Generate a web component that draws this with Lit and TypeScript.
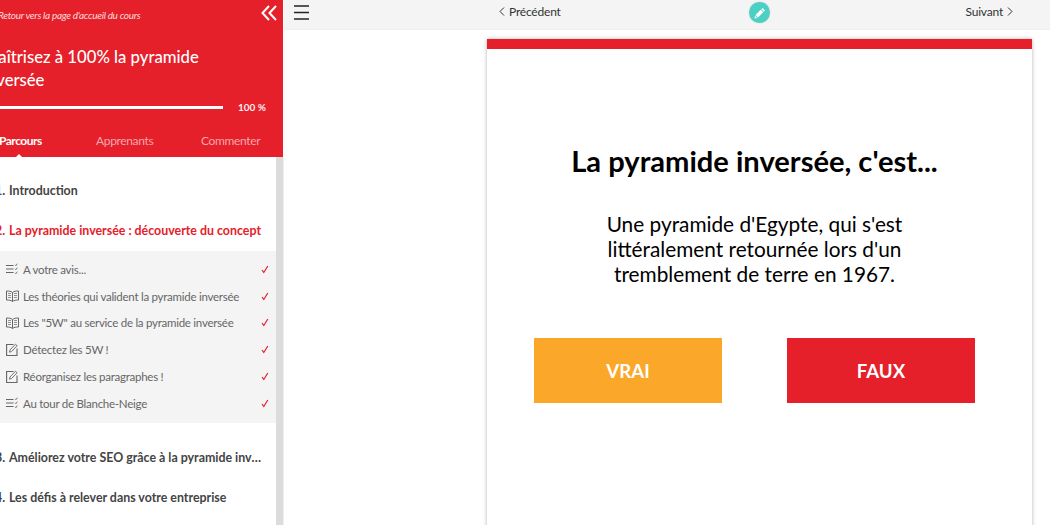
import { LitElement, html, css, svg } from "lit";
import { customElement } from "lit/decorators.js";

const listIcon = svg`<svg class="ic" viewBox="0 0 12 12" width="12" height="12" fill="none" stroke="#666" stroke-width="1"><path d="M0 2.500h7.500M0 6h7.500M0 9.500h7.500"/><path d="M9 1.800l.9.9 1.400-2M9 5.800l.9.9 1.400-2M9 9.800l.9.9 1.400-2" stroke-width=".9"/></svg>`;
const bookIcon = svg`<svg class="ic" viewBox="0 0 13 12" width="13" height="12" fill="none" stroke="#666" stroke-width="1"><path d="M6.500 2.500C5 1.200 3 1 .5 1v9c2.500 0 4.500.2 6 1.500 1.500-1.300 3.500-1.500 6-1.500V1c-2.500 0-4.500.2-6 1.500zM6.500 2.500v9"/><path d="M2 3.500h3M2 5.500h3M2 7.500h3M8 3.500h3M8 5.500h3M8 7.500h3" stroke-width=".7"/></svg>`;
const editIcon = svg`<svg class="ic" viewBox="0 0 12 13" width="12" height="13" fill="none" stroke="#666" stroke-width="1.100"><path d="M11 5.500v7H.6V1.500h7"/><path d="M3.500 9.200l.5-2.200L9.500 1.200l1.600 1.500-5.500 5.800z" stroke-width=".9"/></svg>`;

const items = [
  [listIcon, "A votre avis..."],
  [bookIcon, "Les théories qui valident la pyramide inversée"],
  [bookIcon, 'Les "5W" au service de la pyramide inversée'],
  [editIcon, "Détectez les 5W !"],
  [editIcon, "Réorganisez les paragraphes !"],
  [listIcon, "Au tour de Blanche-Neige"],
];

@customElement("app-root")
export class AppRoot extends LitElement {
  static styles = css`
    :host { display: block; width: 1050px; height: 525px; overflow: hidden; font-family: Lato, "Open Sans", sans-serif; background: #fff; }
    .page { display: flex; height: 525px; }
    .side { width: 284px; flex: none; overflow: hidden; display: flex; flex-direction: column; box-sizing: border-box; }
    .head { width: 283px; height: 157px; flex: none; background: #e5202a; color: #fff; position: relative; box-sizing: border-box; overflow: hidden; }
    .back { font-size: 10px; letter-spacing: -.3px; font-style: italic; margin: 8px 0 0 -2px; line-height: 14px; color: #fbdcdd; white-space: nowrap; }
    .chev { position: absolute; left: 261px; top: 5px; }
    .title { font-size: 16.700px; line-height: 23px; margin: 24px 0 0 -17px; width: 243px; font-weight: 500; }
    .progress { display: flex; align-items: center; margin-top: 8px; height: 14px; }
    .bar { width: 223px; height: 3px; background: #fff; flex: none; }
    .pct { font-size: 10px; font-weight: 700; margin-left: 15px; color: #fdeeee; }
    .tabs { display: flex; position: relative; margin-top: 19px; font-size: 12px; line-height: 16px; white-space: nowrap; letter-spacing: -.35px; }
    .tab { color: #f7a6aa; flex: none; }
    .tab.on { color: #fff; width: 97px; margin-left: -1px; font-weight: 700; letter-spacing: -.5px; }
    .tab.mid { width: 105px; }
    .notch { position: absolute; left: 14px; top: 21px; width: 0; height: 0; border: 5px solid transparent; border-top: 0; border-bottom-color: #fff; }
    .body { flex: 1; display: flex; min-height: 0; }
    .list { width: 276px; flex: none; overflow: hidden; }
    .scroll { width: 7px; background: #dcdcdc; flex: none; }
    .edge { width: 1px; background: #eee; flex: none; }
    .sec { display: flex; height: 39.500px; align-items: center; font-size: 12.400px; font-weight: 700; color: #444; white-space: nowrap; margin-left: -5px; }
    .sec .n { width: 14px; flex: none; }
    .sec.first { margin-top: 14px; }
    .sec.red { color: #e5202a; }
    .sec .t { overflow: hidden; text-overflow: ellipsis; width: 255px; }
    .sec.red .t { width: 258px; }
    .sub { background: #f4f4f4; margin-top: 1px; padding: 5px 0 6px; margin-bottom: 15px; }
    .row { display: flex; align-items: center; height: 26.800px; font-size: 11.500px; letter-spacing: -.26px; color: #666; white-space: nowrap; }
    .icw { width: 23px; flex: none; padding-left: 6px; box-sizing: border-box; display: flex; }
    .lbl { flex: 1; }
    .ic { display: block; }
    .chk { width: 8px; flex: none; display: flex; margin-right: 7px; }
    .main { flex: 1; min-width: 0; display: flex; flex-direction: column; }
    .top { height: 30px; padding-bottom: 6px; background: #f4f4f4; flex: none; border-bottom: 1px solid #efefef; box-sizing: border-box; display: grid; grid-template-columns: 1fr auto 1fr; position: relative; align-items: center; font-size: 12px; letter-spacing: -.2px; color: #333; }
    .burger { position: absolute; left: 10px; top: 5px; display: block; }
    .prev { display: flex; align-items: center; gap: 4px; margin-left: 215px; }
    .next { display: flex; align-items: center; gap: 4px; justify-content: flex-end; margin-right: 37px; }
    .pen { position: absolute; left: 465px; top: 2px; width: 21px; height: 21px; border-radius: 50%; background: #4dd0c4; display: flex; align-items: center; justify-content: center; box-shadow: 0 0 2px rgba(0,0,0,.15); }
    .stage { flex: 1; padding: 9px 18px 0 203px; min-height: 0; overflow: hidden; }
    .card { height: 520px; padding-right: 10px; background: #fff; box-shadow: 0 0 4px rgba(0,0,0,.3); border-top: 10px solid #e5202a; display: flex; flex-direction: column; align-items: center; box-sizing: border-box; }
    h1 { margin: 94px 0 0; font-size: 29.100px; line-height: 36px; font-weight: 700; color: #000; }
    p { margin: 32px 0 0; width: 360px; text-align: center; font-size: 20.800px; line-height: 25px; color: #000; }
    .btns { display: flex; gap: 65px; margin-top: 52px; }
    .btn { width: 188px; height: 65px; display: flex; align-items: center; justify-content: center; color: #fff; font-size: 18.600px; font-weight: 700; }
    .v { background: #fba82a; }
    .f { background: #e5202a; }
  `;

  render() {
    return html`<div class="page">
      <div class="side">
        <div class="head">
          <div class="back">Retour vers la page d'accueil du cours</div>
          <svg class="chev" width="16" height="16" viewBox="0 0 16 16" fill="none" stroke="#fff" stroke-width="2"><path d="M8 1L1.500 8 8 15M15 1L8.500 8 15 15"/></svg>
          <div class="title">Maîtrisez à 100% la pyramide inversée</div>
          <div class="progress"><div class="bar"></div><div class="pct">100 %</div></div>
          <div class="tabs">
            <div class="tab on">Parcours</div>
            <div class="tab mid">Apprenants</div>
            <div class="tab">Commenter</div>
            <div class="notch"></div>
          </div>
        </div>
        <div class="body">
          <div class="list">
            <div class="sec first"><span class="n">1.</span><span class="t">Introduction</span></div>
            <div class="sec red"><span class="n">2.</span><span class="t">La pyramide inversée : découverte du concept</span></div>
            <div class="sub">
              ${items.map(([ic, t]) => html`<div class="row"><span class="icw">${ic}</span><span class="lbl">${t}</span>
                <span class="chk"><svg width="8" height="9" viewBox="0 0 8 9" fill="none" stroke="#e5202a" stroke-width="1.200"><path d="M1 5l1.800 2.500L6.800 1"/></svg></span></div>`)}
            </div>
            <div class="sec"><span class="n">3.</span><span class="t">Améliorez votre SEO grâce à la pyramide inversée</span></div>
            <div class="sec"><span class="n">4.</span><span class="t">Les défis à relever dans votre entreprise</span></div>
          </div>
          <div class="scroll"></div>
          <div class="edge"></div>
        </div>
      </div>
      <div class="main">
        <div class="top">
          <svg class="burger" width="16" height="16" viewBox="0 0 16 16" stroke="#222" stroke-width="1.600"><path d="M0 1h15M0 7.500h15M0 14h15"/></svg>
          <div class="prev"><svg width="6" height="9" viewBox="0 0 6 9" fill="none" stroke="#333" stroke-width="1"><path d="M5 .5L1 4.500 5 8.500"/></svg>Précédent</div>
          <div></div>
          <div class="next">Suivant<svg width="6" height="9" viewBox="0 0 6 9" fill="none" stroke="#333" stroke-width="1"><path d="M1 .5L5 4.500 1 8.500"/></svg></div>
          <div class="pen"><svg width="12" height="12" viewBox="0 0 12 12" fill="#fff"><path d="M8.500 1l2.500 2.500-1.200 1.200-2.500-2.500zM6.700 2.800l2.500 2.500-5.200 5.200-2.500-2.500zM1 8.700l2.300 2.300L.5 11.500z"/></svg></div>
        </div>
        <div class="stage">
          <div class="card">
            <h1>La pyramide inversée, c'est...</h1>
            <p>Une pyramide d'Egypte, qui s'est littéralement retournée lors d'un tremblement de terre en 1967.</p>
            <div class="btns"><div class="btn v">VRAI</div><div class="btn f">FAUX</div></div>
          </div>
        </div>
      </div>
    </div>`;
  }
}
